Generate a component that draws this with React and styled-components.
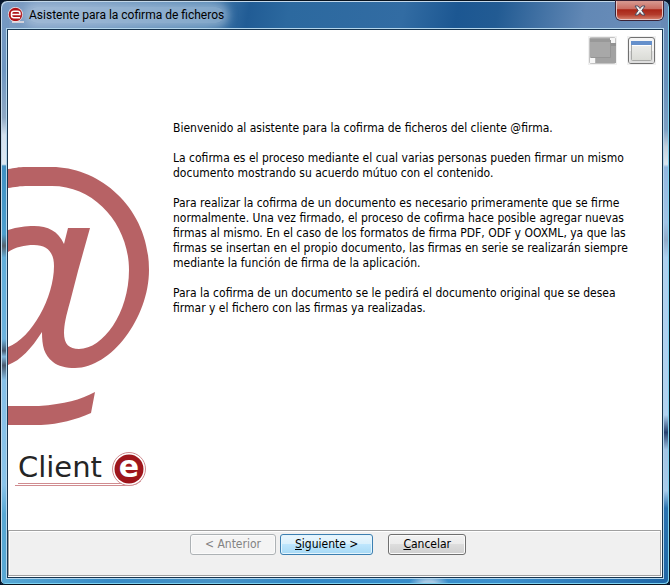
import React from "react";
import styled, { createGlobalStyle, css } from "styled-components";

const uiFont = '"DejaVu Sans Condensed", "DejaVu Sans", sans-serif';

const GlobalStyle = createGlobalStyle`
  *, *::before, *::after { box-sizing: border-box; }
  body { margin: 0; background: #06152b; font: 12px/15px ${uiFont}; color: #000; }
`;

const Window = styled.div`
  display: flex;
  flex-direction: column;
  min-height: 100vh;
  padding: 0 6px 6px;
  border: 1px solid #08131f;
  border-radius: 7px 7px 5px 5px;
  box-shadow: inset 1px 1px #c3d8ea, inset -1px -1px #7fd3f0;
  background:
    radial-gradient(ellipse 20px 10px at 428px 100%, #a9c9e4 30%, transparent) left bottom / 100% 7px no-repeat,
    linear-gradient(#7699c2, #6f97c2 12%, #8fa9c4 20%, #d3e1ee 23%, #dce8f2 28%, #3f90c2 28.3%, #4d9fce 40%,
      #55636f 42%, #62aeda 44%, #6db3de 58%, #465a70 60%, #7fb7dd 61%, #48596e 62.5%, #86c0e8 65%, #8ac4ea 83%, #58a8d4 88%, #58a8d4) left top / 8px 100% no-repeat,
    linear-gradient(#6687b4, #6a90bb 14%, #7d9fc3 22%, #c4cfdc 25%, #dbe5ef 28%, #93b7e0 28.5%, #a2c3e6 38%,
      #93abc9 41%, #aed0f0 44%, #b2d2f1 71%, #27406e 74%, #a3c4e4 77%, #a9cbea 84%, #2b73b0 87%, #1f66a6) right top / 8px 100% no-repeat,
    linear-gradient(90deg, #58a8d4, #378bc6 16%, #4893c6 32%, #3288c6 45%, #3c90cd 75%, #1f66a6) left bottom / 100% 8px no-repeat,
    linear-gradient(100deg, #7d9cc2, #6f95bf 12%, #477dae 31%, #215c95 37%, #2c699f 43%, #326ca3 60%, #1c5792 68%, #225b93 74%, #6288b5 87%, #6d8fbb) left top / 100% 32px no-repeat,
    #477dae;
`;

const TitleBar = styled.header`
  display: flex;
  align-items: flex-start;
  justify-content: space-between;
  height: 28px;
`;

const Title = styled.h1`
  display: flex;
  align-items: center;
  gap: 5px;
  height: 28px;
  margin: 0;
  padding: 0 8px 0 1px;
  font: 12px/16px Roboto, sans-serif;
`;

const TitleText = styled.span`
  border-radius: 8px;
  background: rgba(196, 214, 232, 0.5);
  box-shadow: 0 0 8px 5px rgba(196, 214, 232, 0.5);
`;

const CloseButton = styled.button`
  display: grid;
  place-items: center;
  width: 47px;
  height: 19px;
  padding: 0;
  border: 1px solid #e5c5c4;
  border-top: 0;
  border-radius: 0 0 5px 5px;
  background: linear-gradient(#d79a92, #c96b60 45%, #a92517 48%, #b33b2b 75%, #d27a66);
  box-shadow: 0 0 0 1px #3b2336;
`;

const Client = styled.div`
  display: flex;
  flex: 1;
  flex-direction: column;
  border: 1px solid #16344f;
  background: #fff;
  box-shadow: 0 0 0 1px #b4d6ec;
`;

const Content = styled.div`
  display: flex;
  flex: 1;
`;

const Sidebar = styled.aside`
  display: flex;
  flex: none;
  flex-direction: column;
  gap: 14px;
  width: 165px;
  padding-top: 136px;
`;

const Drawing = styled.svg`
  display: block;
  flex: none;
`;

const Main = styled.main`
  flex: 1;
  min-width: 0;
`;

const Toolbar = styled.div`
  display: flex;
  justify-content: flex-end;
  gap: 10px;
  padding: 6px 6px 0 0;
`;

const ToolButton = styled.button`
  padding: 0;
  border: 0;
  background: #f0f0f0;
`;

const Message = styled.section`
  display: grid;
  gap: 15px;
  margin-top: 56px;
`;

const Paragraph = styled.p`
  margin: 0;
  white-space: nowrap;
`;

const Footer = styled.footer`
  display: flex;
  align-items: flex-start;
  justify-content: center;
  gap: 4px;
  min-height: 46px;
  margin: 0 1px 1px 0;
  padding: 3px 13px 3px 0;
  border: 1px solid #a0a0a0;
  background: #f0f0f0;
  box-shadow: inset 1px 1px #fff, 1px 1px #fff;
`;

const Button = styled.button`
  height: 21px;
  padding: 0 14px;
  border: 1px solid #707070;
  border-radius: 3px;
  background: linear-gradient(#f2f2f2, #ebebeb 48%, #dddddd 50%, #cfcfcf);
  box-shadow: inset 0 0 0 1px #fbfbfb;
  color: #000;
  font: 12px/15px ${uiFont};

  &:disabled {
    border-color: #adb2b5;
    background: #f4f4f4;
    color: #838383;
  }

  ${(p) => p.$primary && css`
    border-color: #3c7fb1;
    background: linear-gradient(#eaf6fd, #d9f0fc 48%, #bee6fd 50%, #a7d9f5);
    box-shadow: inset 0 0 0 1px #e4f5fd;
  `}
`;

const Cancel = styled(Button)`
  margin-left: 11px;
`;

const AppIcon = () => (
  <Drawing width="16" height="16" viewBox="0 0 16 16" aria-hidden="true">
    <circle cx="7.500" cy="7.500" r="7.500" fill="#f3e4e4" />
    <circle cx="7.500" cy="7.500" r="6.800" fill="#b01217" />
    <path d="M12 10.800H6Q3.500 10.800 3.500 8.500V6.500Q3.500 4.300 6 4.300H9.500Q12 4.300 12 6.500V7.600H4" fill="none" stroke="#fff" strokeWidth="1.500" />
    <path d="M4 15H16" stroke="#f3e4e4" strokeWidth="1.500" />
  </Drawing>
);

const AtSign = () => (
  <Drawing width="143" height="260" viewBox="8 166 143 260" fill="#b76265" aria-hidden="true">
    <path d="M8 169C15 168 18 167 26 167H52C99 167 149 207 149 270C149 318 111 368 75 368C66 368 58 366 53 362C44 355 42 346 42 332C31 349 21 360 8 365V347C32 338 54 297 54 266C54 252 47 245 34 245C24 245 16 247 8 252V230C18 227 25 226 34 226C48 226 58 231 64 244L68 228H90L78 271L70 302C66 316 64 325 64 333C64 344 69 349 79 349C103 349 129 313 129 270C129 226 96 186 52 186H28C20 186 15 187 8 188Z" />
    <path d="M8 406H39C65 404 80 400 95 392L91 413C75 420 60 424 41 425H8Z" />
  </Drawing>
);

const Logo = () => (
  <Drawing width="143" height="58" viewBox="8 440 143 58" role="img" aria-label="Client e">
    <text x="18" y="477" fontFamily="'DejaVu Sans', sans-serif" fontSize="29" fill="#252525">Client</text>
    <path d="M18 483.500H122" stroke="#d08c90" />
    <path d="M15 485.500H130Q137 485 141 481" fill="none" stroke="#d08c90" />
    <circle cx="129" cy="469" r="16.500" fill="#fff" stroke="#d08c90" />
    <circle cx="129" cy="469" r="14.500" fill="#9e151b" />
    <text x="129" y="477" textAnchor="middle" fontFamily="'DejaVu Sans', sans-serif" fontWeight="bold" fontSize="30" fill="#fff">e</text>
  </Drawing>
);

const CloseIcon = () => (
  <Drawing width="12" height="11" viewBox="0 0 12 11" aria-hidden="true">
    <path d="M1 1H4L6 3.500L8 1H11L7.800 5.500L11 10H8L6 7.500L4 10H1L4.200 5.500Z" fill="#f4f4f4" stroke="#4a4e62" />
  </Drawing>
);

const WindowsIcon = () => (
  <Drawing width="29" height="29" viewBox="0 0 29 29" aria-hidden="true">
    <rect x="1.500" y="1.500" width="26" height="26" rx="2" fill="#b4b4b4" stroke="#c3c3c3" />
    <rect x="22" y="2" width="5" height="5" fill="#f7f7f7" />
    <rect x="2" y="22" width="5" height="5" fill="#f7f7f7" />
    <rect x="8" y="7" width="20" height="20" fill="#a2a2a2" />
    <rect x="8" y="7" width="20" height="3" fill="#929292" />
    <rect x="2" y="2" width="20" height="19" fill="#a8a8a8" />
    <rect x="2" y="3" width="20" height="3" fill="#999" />
    <path d="M3 21.500H22.500V4" fill="none" stroke="#959595" />
  </Drawing>
);

const PanelIcon = () => (
  <Drawing width="29" height="29" viewBox="0 0 29 29" aria-hidden="true">
    <defs>
      <linearGradient id="sheet" x2="0" y2="1">
        <stop stopColor="#f1f1ef" />
        <stop offset="1" stopColor="#dadbd6" />
      </linearGradient>
    </defs>
    <rect x="1.500" y="1.500" width="26" height="26" rx="2.500" fill="#f5f5f5" stroke="#707070" />
    <rect x="2.500" y="15" width="24" height="12" fill="#dedede" />
    <rect x="4.500" y="5.500" width="20" height="19" rx="1" fill="url(#sheet)" stroke="#a9aaa8" />
    <rect x="4" y="5" width="21" height="4" fill="#6590cb" />
    <path d="M5 9.500H24" stroke="#fff" />
  </Drawing>
);

export default function App() {
  return (
    <>
      <GlobalStyle />
      <Window>
        <TitleBar>
          <Title>
            <AppIcon />
            <TitleText>Asistente para la cofirma de ficheros</TitleText>
          </Title>
          <CloseButton type="button" aria-label="Cerrar"><CloseIcon /></CloseButton>
        </TitleBar>
        <Client>
          <Content>
            <Sidebar>
              <AtSign />
              <Logo />
            </Sidebar>
            <Main>
              <Toolbar>
                <ToolButton type="button" disabled aria-label="Ventanas"><WindowsIcon /></ToolButton>
                <ToolButton type="button" aria-label="Maximizar"><PanelIcon /></ToolButton>
              </Toolbar>
              <Message>
                <Paragraph>Bienvenido al asistente para la cofirma de ficheros del cliente @firma.</Paragraph>
                <Paragraph>
                  La cofirma es el proceso mediante el cual varias personas pueden firmar un mismo<br />
                  documento mostrando su acuerdo mútuo con el contenido.
                </Paragraph>
                <Paragraph>
                  Para realizar la cofirma de un documento es necesario primeramente que se firme<br />
                  normalmente. Una vez firmado, el proceso de cofirma hace posible agregar nuevas<br />
                  firmas al mismo. En el caso de los formatos de firma PDF, ODF y OOXML, ya que las<br />
                  firmas se insertan en el propio documento, las firmas en serie se realizarán siempre<br />
                  mediante la función de firma de la aplicación.
                </Paragraph>
                <Paragraph>
                  Para la cofirma de un documento se le pedirá el documento original que se desea<br />
                  firmar y el fichero con las firmas ya realizadas.
                </Paragraph>
              </Message>
            </Main>
          </Content>
          <Footer>
            <Button type="button" disabled>&lt; Anterior</Button>
            <Button type="button" $primary><u>S</u>iguiente &gt;</Button>
            <Cancel type="button"><u>C</u>ancelar</Cancel>
          </Footer>
        </Client>
      </Window>
    </>
  );
}
